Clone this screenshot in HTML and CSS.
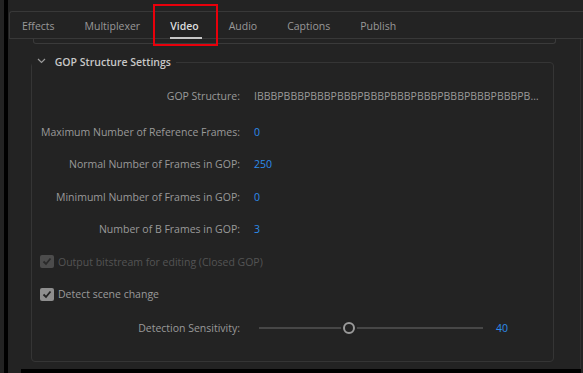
FILE: index.html
```
<!DOCTYPE html>
<html>

<head>
	<meta charset="UTF-8">
	<title>Export Settings</title>
	<link rel="stylesheet" href="styles.css">
</head>

<body>
	<div class="app">
		<div class="rail"></div>
		<div class="panel">
			<nav class="tabs">
				<span class="tab">Effects</span>
				<span class="tab">Multiplexer</span>
				<span class="tab active">Video<span class="mark"></span></span>
				<span class="tab">Audio</span>
				<span class="tab">Captions</span>
				<span class="tab">Publish</span>
			</nav>
			<div class="content">
				<div class="prev"></div>
				<fieldset class="group">
					<legend>
						<svg class="chevron" width="9" height="6" viewBox="0 0 9 6"><path d="M1 1 L4.5 4.5 L8 1" fill="none" stroke="#9a9a9a" stroke-width="1.2"/></svg>
						GOP Structure Settings
					</legend>
					<div class="row first">
						<span class="label">GOP Structure:</span>
						<span class="text">IBBBPBBBPBBBPBBBPBBBPBBBPBBBPBBBPBBBPBBBPBBBPBBBPBBBP</span>
					</div>
					<div class="row">
						<span class="label">Maximum Number of Reference Frames:</span>
						<span class="value">0</span>
					</div>
					<div class="row">
						<span class="label">Normal Number of Frames in GOP:</span>
						<span class="value">250</span>
					</div>
					<div class="row">
						<span class="label">Minimuml Number of Frames in GOP:</span>
						<span class="value">0</span>
					</div>
					<div class="row">
						<span class="label">Number of B Frames in GOP:</span>
						<span class="value">3</span>
					</div>
					<div class="row check disabled">
						<span class="box"><svg width="14" height="13" viewBox="0 0 14 13"><path d="M3.5 6.5 L6 9 L10.5 3.5" fill="none" stroke="#2a2a2a" stroke-width="1.8"/></svg></span>
						Output bitstream for editing (Closed GOP)
					</div>
					<div class="row check">
						<span class="box"><svg width="14" height="13" viewBox="0 0 14 13"><path d="M3.5 6.5 L6 9 L10.5 3.5" fill="none" stroke="#232323" stroke-width="1.8"/></svg></span>
						Detect scene change
					</div>
					<div class="row last">
						<span class="label">Detection Sensitivity:</span>
						<span class="slider"><span class="knob"></span></span>
						<span class="value">40</span>
					</div>
				</fieldset>
			</div>
			<div class="footer"></div>
		</div>
	</div>
</body>

</html>
```

FILE: styles.css
```
body,
html {
	margin: 0;
	padding: 0;
	overflow: hidden;
	background: #232323;
	font-family: 'Open Sans', sans-serif;
	font-size: 10.5px;
}

* {
	box-sizing: border-box;
}

.app {
	display: flex;
	width: 583px;
	height: 373px;
}

.rail {
	flex: none;
	width: 4px;
	margin-left: 4px;
	background: #000000;
}

.panel {
	flex: 1;
	display: flex;
	flex-direction: column;
	padding-top: 11px;
}

.tabs {
	display: flex;
	align-items: center;
	height: 28px;
	margin-left: 1px;
	padding-left: 12px;
	gap: 30px;
	border-top: 1px solid #383838;
	border-left: 1px solid #383838;
	border-bottom: 1px solid #383838;
	border-radius: 3px 0 0 0;
	color: #999999;
}

.tab {
	position: relative;
	line-height: 16px;
	padding-top: 1px;
}

.tab.active {
	color: #dddddd;
	font-weight: 600;
}

.tab.active:after {
	content: "";
	position: absolute;
	left: 0;
	right: -3px;
	bottom: -5px;
	height: 2px;
	background: #c8c8c8;
}

.tab .mark {
	position: absolute;
	left: -17px;
	right: -19px;
	top: -13px;
	bottom: -12px;
	border: 2px solid #e8000b;
}

.content {
	flex: 1;
	margin-right: 2px;
	border-right: 1px solid #303030;
}

.prev {
	height: 5px;
	margin: 0 24px 0 25px;
	border: 1px solid #3a3a3a;
	border-top: 0 none;
	border-radius: 0 0 3px 3px;
}

.group {
	margin: 10px 26px 0 23px;
	padding: 9px 0 16px 0;
	border: 1px solid #353535;
	border-radius: 4px;
	min-width: 0;
}

.group legend {
	padding: 0 5px 0 5px;
	margin-left: 0;
	color: #c8c8c8;
	font-weight: 600;
	line-height: 16px;
}

.group .chevron {
	margin-right: 6px;
	vertical-align: 2px;
}

.row {
	display: flex;
	align-items: center;
	height: 32.5px;
	color: #9a9a9a;
	white-space: nowrap;
}

.row.first {
	height: 33px;
	margin-bottom: 3.5px;
}

.row.last {
	margin-top: 1.5px;
}

.row .label {
	flex: none;
	width: 208px;
	text-align: right;
	margin-right: 14px;
}

.row .text {
	width: 287px;
	overflow: hidden;
	text-overflow: ellipsis;
	color: #9a9a9a;
}

.row .value {
	color: #2d8ceb;
}

.row.check {
	padding-left: 8px;
}

.row.check .box {
	display: inline-block;
	width: 14px;
	height: 13px;
	margin-right: 4px;
	border-radius: 2px;
	background: #8e8e8e;
}

.row.check .box svg {
	display: block;
}

.row.disabled {
	color: #545454;
}

.row.disabled .box {
	background: #4c4c4c;
}

.slider {
	position: relative;
	flex: none;
	width: 224px;
	height: 2px;
	margin: 0 13px 0 5px;
	background: #474747;
}

.knob {
	position: absolute;
	left: 84px;
	top: -5px;
	width: 12px;
	height: 12px;
	border: 2px solid #9a9a9a;
	border-radius: 50%;
	background: #232323;
	box-shadow: 0 0 0 2px #232323;
}

.footer {
	flex: none;
	height: 4px;
	margin: 0 2px 0 13px;
	background: #000000;
}
```
